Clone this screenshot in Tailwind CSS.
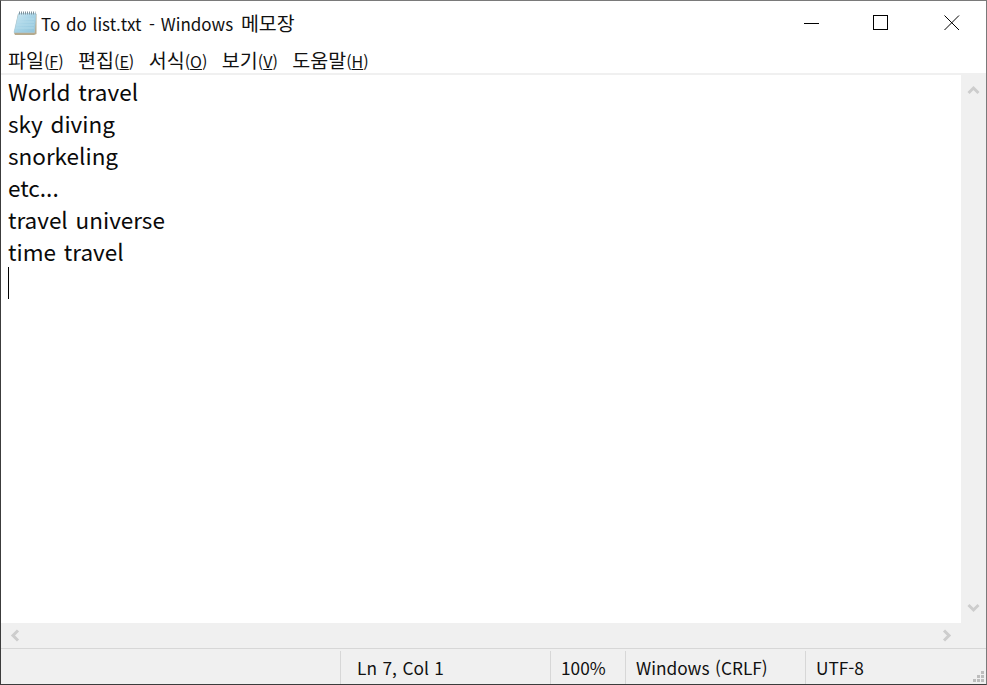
<!doctype html>
<html lang="ko">
  <head>
    <meta charset="UTF-8" />
    <title>To do list.txt - Windows 메모장</title>
    <script src="https://cdn.jsdelivr.net/npm/@tailwindcss/browser@4"></script>
  </head>
  <body class="w-[987px] h-[685px] overflow-hidden bg-white">
    <div class="w-[987px] h-[685px] flex flex-col border border-[#3c3c3c] border-t-[#7a7a7a] border-r-[#7a7a7a] bg-white text-black font-['Noto_Sans_CJK_KR','Noto_Sans',sans-serif]">
      <!-- title bar -->
      <div class="h-[48px] flex items-center shrink-0">
        <svg class="ml-[12px] mt-[-4px] w-[24px] h-[25px] shrink-0" viewBox="0 0 24 25">
          <defs>
            <linearGradient id="page" x1="0" y1="0" x2="1" y2="1">
              <stop offset="0" stop-color="#cfe9f4" />
              <stop offset=".5" stop-color="#a6d3e6" />
              <stop offset="1" stop-color="#8fc3da" />
            </linearGradient>
          </defs>
          <path d="M5 3H23.5V23L21 24H2L1 22Z" fill="#b5aa8e" />
          <path d="M5.5 2.5H23L21.5 21.5H1Z" fill="url(#page)" stroke="#a8cfe0" stroke-width=".6" />
          <path d="M4 8H21.5M3.6 11H21.2M3.2 14H21M2.8 17H20.8" stroke="#b9deec" stroke-width=".8" />
          <path d="M6 2H22.5" stroke="#7f929c" stroke-width="3" stroke-dasharray="1 1" />
        </svg>
        <span class="ml-[4px] mt-[-5px] text-[17px] leading-none [word-spacing:1px] text-[#111]">To do list.txt<span class="ml-[2px]"> - Windows</span> <span class="ml-[2px] text-[19.5px]">메모장</span></span>
        <div class="ml-auto flex items-center mr-[26px] mt-[-5px]">
          <svg class="w-[16px] h-[16px]" viewBox="0 0 16 16"><path d="M0 8.5H15" stroke="#000" /></svg>
          <svg class="ml-[53px] w-[16px] h-[16px]" viewBox="0 0 16 16"><rect x=".5" y=".5" width="14" height="14" fill="none" stroke="#000" /></svg>
          <svg class="ml-[55px] w-[16px] h-[16px]" viewBox="0 0 16 16"><path d="M.5 .5L15 15M15 .5L.5 15" stroke="#000" fill="none" /></svg>
        </div>
      </div>
      <!-- menu bar -->
      <div class="h-[24px] flex items-center gap-[14.5px] pl-[7px] shrink-0 text-[19.5px] leading-none text-[#111]">
        <span class="mt-[-3px]">파일<span class="text-[16px]">(<u>F</u>)</span></span>
        <span class="mt-[-3px]">편집<span class="text-[16px]">(<u>E</u>)</span></span>
        <span class="mt-[-3px]">서식<span class="text-[16px]">(<u>O</u>)</span></span>
        <span class="mt-[-3px]">보기<span class="text-[16px]">(<u>V</u>)</span></span>
        <span class="mt-[-3px]">도움말<span class="text-[16px]">(<u>H</u>)</span></span>
      </div>
      <div class="h-[2px] bg-[#f0f0f0] shrink-0"></div>
      <!-- editor -->
      <div class="flex-1 flex min-h-0">
        <div class="flex-1 pl-[7px] text-[22.5px] leading-[32px] [word-spacing:1.5px] text-[#0a0a0a]">
          <div>World travel</div>
          <div>sky diving</div>
          <div>snorkeling</div>
          <div>etc...</div>
          <div>travel universe</div>
          <div>time travel</div>
          <div class="w-px h-[32px] bg-black"></div>
        </div>
        <div class="w-[25px] bg-[#f0f0f0] flex flex-col justify-between items-center py-[10px] shrink-0">
          <svg class="w-[13px] h-[10px]" viewBox="0 0 13 10"><path d="M1.5 8L6.5 3L11.5 8" fill="none" stroke="#cdcdcd" stroke-width="3" /></svg>
          <svg class="w-[13px] h-[10px]" viewBox="0 0 13 10"><path d="M1.5 2L6.5 7L11.5 2" fill="none" stroke="#cdcdcd" stroke-width="3" /></svg>
        </div>
      </div>
      <!-- horizontal scrollbar -->
      <div class="h-[25px] bg-[#f0f0f0] flex items-center justify-between pl-[9px] pr-[34px] shrink-0">
        <svg class="w-[10px] h-[13px]" viewBox="0 0 10 13"><path d="M8 1.5L3 6.5L8 11.5" fill="none" stroke="#cdcdcd" stroke-width="3" /></svg>
        <svg class="w-[10px] h-[13px]" viewBox="0 0 10 13"><path d="M2 1.5L7 6.5L2 11.5" fill="none" stroke="#cdcdcd" stroke-width="3" /></svg>
      </div>
      <!-- status bar -->
      <div class="relative h-[36px] bg-[#f0f0f0] border-t border-[#d7d7d7] flex shrink-0 text-[17.3px] leading-none [word-spacing:0.7px] text-[#111] pt-[2px]">
        <div class="w-[339px] h-[33px]"></div>
        <div class="w-[210px] h-[33px] border-l border-[#d7d7d7] pl-[16px] flex items-center">Ln 7, Col 1</div>
        <div class="w-[75px] h-[33px] border-l border-[#d7d7d7] pl-[10px] flex items-center">100%</div>
        <div class="w-[180px] h-[33px] border-l border-[#d7d7d7] pl-[10px] flex items-center">Windows (CRLF)</div>
        <div class="flex-1 h-[33px] border-l border-[#d7d7d7] pl-[10px] flex items-center">UTF-8</div>
        <svg class="absolute right-[1px] bottom-[1px] w-[12px] h-[12px]" viewBox="0 0 12 12" fill="#bdbdbd">
          <rect x="8" y="0" width="3" height="3" />
          <rect x="4" y="4" width="3" height="3" />
          <rect x="8" y="4" width="3" height="3" />
          <rect x="0" y="8" width="3" height="3" />
          <rect x="4" y="8" width="3" height="3" />
          <rect x="8" y="8" width="3" height="3" />
        </svg>
      </div>
    </div>
  </body>
</html>
